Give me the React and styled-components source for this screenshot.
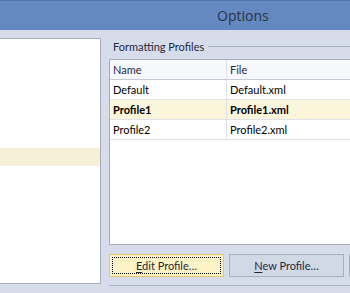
import React from "react";
import styled, { createGlobalStyle } from "styled-components";

const Global = createGlobalStyle`
  html, body { margin: 0; padding: 0; }
  body { font-family: "Lato", "Open Sans", sans-serif; }
`;

const Window = styled.div`
  width: 350px;
  height: 293px;
  overflow: hidden;
  display: flex;
  flex-direction: column;
  background: #d6dce9;
`;

const TitleBar = styled.div`
  height: 30px;
  flex: none;
  box-sizing: border-box;
  border-top: 1px solid #4f72a8;
  background: #6488c0;
  display: flex;
  align-items: center;
  padding-left: 217px;
  font-family: "Open Sans", sans-serif;
  font-size: 14px;
  color: #2a3446;
`;

const Body = styled.div`
  flex: 1;
  display: flex;
  min-height: 0;
`;

const LeftPane = styled.div`
  width: 100px;
  flex: none;
  margin: 8px 0 9px 0;
  background: #fff;
  border: 1px solid #a3acbd;
  border-left: none;
  padding-top: 109px;
`;

const SelectedItem = styled.div`
  height: 18px;
  background: #f7f0d9;
`;

const RightPane = styled.div`
  flex: 1;
  display: flex;
  flex-direction: column;
  padding: 9px 0 0 8px;
  min-width: 0;
`;

const GroupHeader = styled.div`
  display: flex;
  align-items: center;
  height: 15px;
  font-size: 11px;
  color: #1e2a40;
  padding-left: 4px;
`;

const GroupLine = styled.div`
  flex: 1;
  height: 1px;
  background: #a7b0c3;
  margin-left: 4px;
`;

const Table = styled.div`
  margin-top: 5px;
  width: 280px;
  height: 186px;
  box-sizing: border-box;
  background: #fff;
  border: 1px solid #a3acbd;
  border-right: none;
  display: flex;
  flex-direction: column;
`;

const Row = styled.div`
  display: grid;
  grid-template-columns: 116px 1fr;
  height: 19px;
  border-bottom: 1px solid ${(p) => (p.$header ? "#c5cad6" : "#dfe2e8")};
  background: ${(p) => (p.$header ? "#f6f8fc" : p.$selected ? "#fbf5dc" : "#fff")};
  font-weight: ${(p) => (p.$selected ? 700 : 400)};
  color: ${(p) => (p.$header ? "#1e2a40" : "#000")};
`;

const Cell = styled.div`
  display: flex;
  align-items: center;
  padding-left: 3px;
  font-size: 11px;
  white-space: nowrap;
  border-left: ${(p) => (p.$first ? "none" : "1px solid #dfe2e8")};
`;

const Buttons = styled.div`
  display: flex;
  gap: 5px;
  margin-top: 9px;
`;

const Button = styled.div`
  width: 115px;
  height: 23px;
  flex: none;
  box-sizing: border-box;
  display: flex;
  align-items: center;
  justify-content: center;
  font-size: 11px;
  color: #1e2a40;
  border: 1px solid ${(p) => (p.$focused ? "#e6c46e" : "#a7b0c3")};
  background: ${(p) => (p.$focused ? "#fdf2c3" : "#d1d8e6")};
  position: relative;
  & u { text-decoration: underline; text-underline-offset: 2px; }
`;

const FocusRect = styled.div`
  position: absolute;
  inset: 2px;
  border: 1px dotted #000;
`;

const BottomLine = styled.div`
  margin-top: 8px;
  height: 1px;
  background: #a7b0c3;
`;

const rows = [
  { name: "Default", file: "Default.xml" },
  { name: "Profile1", file: "Profile1.xml", selected: true },
  { name: "Profile2", file: "Profile2.xml" },
];

export default function App() {
  return (
    <>
      <Global />
      <Window>
        <TitleBar>Options</TitleBar>
        <Body>
          <LeftPane>
            <SelectedItem />
          </LeftPane>
          <RightPane>
            <GroupHeader>
              Formatting Profiles
              <GroupLine />
            </GroupHeader>
            <Table>
              <Row $header>
                <Cell $first>Name</Cell>
                <Cell>File</Cell>
              </Row>
              {rows.map((r) => (
                <Row key={r.name} $selected={r.selected}>
                  <Cell $first>{r.name}</Cell>
                  <Cell>{r.file}</Cell>
                </Row>
              ))}
            </Table>
            <Buttons>
              <Button $focused>
                <FocusRect />
                <span><u>E</u>dit Profile…</span>
              </Button>
              <Button>
                <span><u>N</u>ew Profile…</span>
              </Button>
              <Button />
            </Buttons>
            <BottomLine />
          </RightPane>
        </Body>
      </Window>
    </>
  );
}
